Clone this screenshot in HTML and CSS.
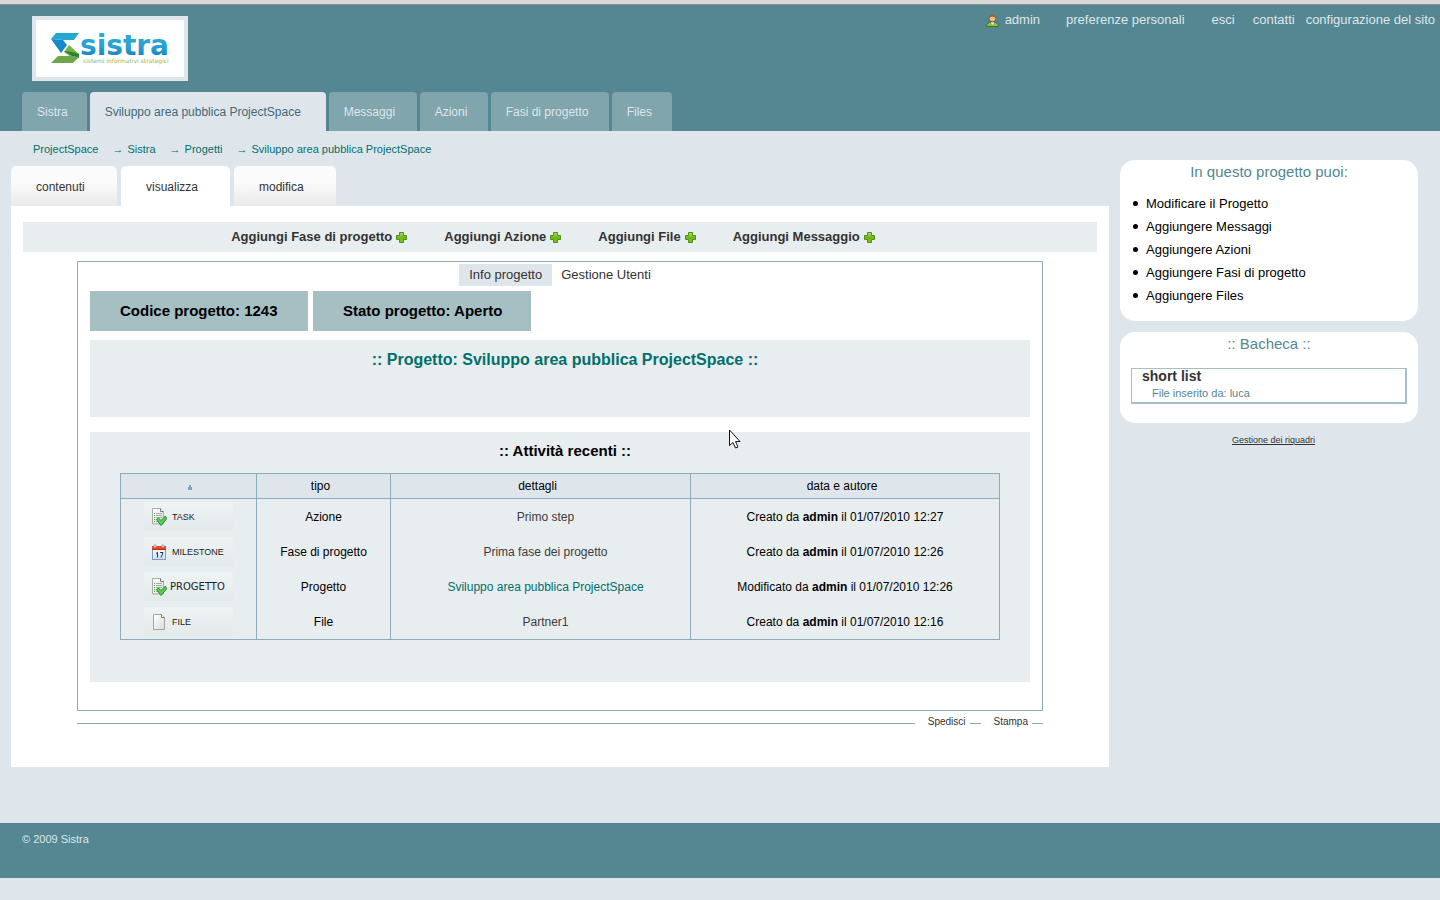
FILE: index.html
```html
<!DOCTYPE html>
<html lang="it">
<head>
<meta charset="utf-8">
<title>Sviluppo area pubblica ProjectSpace</title>
<link rel="stylesheet" href="styles.css">
</head>
<body>
<svg class="defs" width="0" height="0" aria-hidden="true">
  <defs>
    <linearGradient id="plusFill" x1="0" y1="0" x2="0" y2="1"><stop offset="0" stop-color="#b4dc6c"/><stop offset=".5" stop-color="#6fb51c"/><stop offset="1" stop-color="#7cc02a"/></linearGradient>
    <linearGradient id="pageFill" x1="0" y1="0" x2="1" y2="1"><stop offset="0" stop-color="#ffffff"/><stop offset="1" stop-color="#dcdcdc"/></linearGradient>
    <linearGradient id="calFill" x1="0" y1="0" x2="0" y2="1"><stop offset="0" stop-color="#ffffff"/><stop offset="1" stop-color="#c9def2"/></linearGradient>
    <linearGradient id="logoBlue" x1="0" y1="0" x2="0" y2="1"><stop offset="0" stop-color="#2fb0d6"/><stop offset=".55" stop-color="#2a9fd0"/><stop offset="1" stop-color="#0b78b4"/></linearGradient>
  </defs>
  <symbol id="plus" viewBox="0 0 11 11"><path d="M3.5.5h4v3h3v4h-3v3h-4v-3h-3v-4h3z" fill="url(#plusFill)" stroke="#4f9210"/></symbol>
  <symbol id="checklist" viewBox="0 0 16 18">
    <path d="M1.500.5h8l3 3v12.500h-11z" fill="url(#pageFill)" stroke="#a9a9a9"/>
    <path d="M9.500.5v3h3" fill="#fff" stroke="#777"/>
    <path d="M5 5.500h6M5 7.500h6M5 9.500h6M5 11.500h4M5 13.500h3" stroke="#aaa"/>
    <path d="M3 5.500h1M3 7.500h1M3 9.500h1M3 11.500h1M3 13.500h1" stroke="#46ad3c"/>
    <path d="M5.500 11.500l2-1.500 2.500 2.500 4.500-4.500 1 3-5.500 6.500z" fill="#57cf4e" stroke="#249130"/>
  </symbol>
  <symbol id="calendar" viewBox="0 0 16 17">
    <rect x="1.500" y="3.500" width="13" height="12" fill="url(#calFill)" stroke="#7f9bc0"/>
    <path d="M1 2h14v4H1z" fill="#e8472b"/>
    <path d="M1 5h14v1H1z" fill="#b82a14"/>
    <circle cx="4" cy="2" r="1.300" fill="#ddd" stroke="#999" stroke-width=".7"/><circle cx="12" cy="2" r="1.300" fill="#ddd" stroke="#999" stroke-width=".7"/>
    <path d="M5 9.500l1.500-1v5M9 8.500h3l-2 5" fill="none" stroke="#333"/>
  </symbol>
  <symbol id="sheet" viewBox="0 0 16 18">
    <path d="M2.500 1.500h8l3 3v12h-11z" fill="url(#pageFill)" stroke="#a3a3a3"/>
    <path d="M10.500 1.500v3h3" fill="#fff" stroke="#777"/>
  </symbol>
</svg>

<header class="header">
  <div class="masthead">
    <a class="logo" href="#" aria-label="Sistra">
      <svg width="148" height="57" viewBox="0 0 148 57">
        <path d="M20 13h23l-5 7H27L15 19z" fill="#25a7d4"/>
        <path d="M15 19l12 1 4 5-6 8z" fill="#1589c8"/>
        <path d="M33 25l10 9-8 3-7-5z" fill="#79b43c"/>
        <path d="M28 31l8 1 7 2v4l-7-2z" fill="#22843e"/>
        <path d="M22 36h14l7 1-6 6H15z" fill="#6aa84b"/>
        <text class="logo-word" x="44" y="35" fill="url(#logoBlue)">sistra</text>
        <text class="logo-tag" x="47" y="43">sistemi informativi strategici</text>
      </svg>
    </a>
    <nav class="personal" aria-label="Utente">
      <a class="user" href="#">
        <svg width="13" height="13" viewBox="0 0 12 12" aria-hidden="true">
          <path d="M.5 11.500V10l3-2.500h5l3 2.500v1.500z" fill="#8cc63c" stroke="#3d5a22" stroke-width=".7"/>
          <path d="M4.500 7.500L6 10l1.500-2.500z" fill="#fff"/>
          <circle cx="6" cy="4" r="3.200" fill="#f0be84" stroke="#875026" stroke-width=".8"/>
          <path d="M3 4C3 0 9 0 9 4L7.500 2.500H4.500z" fill="#98602d"/>
        </svg>admin</a>
      <a class="prefs" href="#">preferenze personali</a>
      <a class="exit" href="#">esci</a>
      <a class="contact" href="#">contatti</a>
      <a class="config" href="#">configurazione del sito</a>
    </nav>
  </div>
  <nav class="tabs" aria-label="Sezioni">
    <a href="#">Sistra</a>
    <a class="current" href="#">Sviluppo area pubblica ProjectSpace</a>
    <a class="messages" href="#">Messaggi</a>
    <a class="tasks" href="#">Azioni</a>
    <a class="phases" href="#">Fasi di progetto</a>
    <a class="files" href="#">Files</a>
  </nav>
</header>

<div class="layout">
  <main class="main">
    <nav class="crumbs" aria-label="Percorso">
      <a href="#">ProjectSpace</a><span class="arrow">→</span><a href="#">Sistra</a><span class="arrow">→</span><a href="#">Progetti</a><span class="arrow">→</span><a href="#">Sviluppo area pubblica ProjectSpace</a>
    </nav>
    <nav class="views" aria-label="Viste">
      <a class="contents" href="#">contenuti</a>
      <a class="current" href="#">visualizza</a>
      <a class="edit" href="#">modifica</a>
    </nav>
    <section class="sheet">
      <div class="toolbar">
        <a href="#">Aggiungi Fase di progetto<svg width="11" height="11"><use href="#plus"/></svg></a>
        <a href="#">Aggiungi Azione<svg width="11" height="11"><use href="#plus"/></svg></a>
        <a href="#">Aggiungi File<svg width="11" height="11"><use href="#plus"/></svg></a>
        <a href="#">Aggiungi Messaggio<svg width="11" height="11"><use href="#plus"/></svg></a>
      </div>
      <div class="project">
        <nav class="subtabs" aria-label="Progetto">
          <a class="current" href="#">Info progetto</a>
          <a href="#">Gestione Utenti</a>
        </nav>
        <div class="facts">
          <div>Codice progetto: 1243</div>
          <div>Stato progetto: Aperto</div>
        </div>
        <div class="panel title-panel"><h1>:: Progetto: Sviluppo area pubblica ProjectSpace ::</h1></div>
        <div class="panel recent">
          <h2>:: Attività recenti ::</h2>
          <table>
            <thead>
              <tr>
                <th class="c-icon" scope="col" aria-label="ordina"><svg width="4" height="5" viewBox="0 0 4 5"><path d="M1 0h2v2h1v3H0V2h1z" fill="#7fa6b8"/></svg></th>
                <th class="c-type" scope="col">tipo</th>
                <th class="c-detail" scope="col">dettagli</th>
                <th scope="col">data e autore</th>
              </tr>
            </thead>
            <tbody>
              <tr>
                <td class="kind"><span class="badge"><svg width="16" height="18"><use href="#checklist"/></svg>TASK</span></td>
                <td>Azione</td><td class="detail"><a href="#">Primo step</a></td>
                <td>Creato da <b>admin</b> il 01/07/2010 12:27</td>
              </tr>
              <tr>
                <td class="kind"><span class="badge"><svg width="16" height="17"><use href="#calendar"/></svg>MILESTONE</span></td>
                <td>Fase di progetto</td><td class="detail"><a href="#">Prima fase dei progetto</a></td>
                <td>Creato da <b>admin</b> il 01/07/2010 12:26</td>
              </tr>
              <tr>
                <td class="kind"><span class="badge badge-project"><svg width="16" height="18"><use href="#checklist"/></svg>PROGETTO</span></td>
                <td>Progetto</td><td class="detail"><a class="project-link" href="#">Sviluppo area pubblica ProjectSpace</a></td>
                <td>Modificato da <b>admin</b> il 01/07/2010 12:26</td>
              </tr>
              <tr>
                <td class="kind"><span class="badge"><svg width="16" height="18"><use href="#sheet"/></svg>FILE</span></td>
                <td>File</td><td class="detail"><a href="#">Partner1</a></td>
                <td>Creato da <b>admin</b> il 01/07/2010 12:16</td>
              </tr>
            </tbody>
          </table>
        </div>
      </div>
      <div class="actions">
        <span class="rule rule-long"></span><a href="#">Spedisci</a><span class="rule"></span><a href="#">Stampa</a><span class="rule"></span>
      </div>
    </section>
  </main>

  <aside class="side">
    <section class="card">
      <h3>In questo progetto puoi:</h3>
      <ul>
        <li>Modificare il Progetto</li>
        <li>Aggiungere Messaggi</li>
        <li>Aggiungere Azioni</li>
        <li>Aggiungere Fasi di progetto</li>
        <li>Aggiungere Files</li>
      </ul>
    </section>
    <section class="card">
      <h3>:: Bacheca ::</h3>
      <div class="note">
        <a href="#">short list</a>
        <p>File inserito da: luca</p>
      </div>
    </section>
    <a class="manage" href="#">Gestione dei riquadri</a>
  </aside>
</div>

<footer class="footer">© 2009 Sistra</footer>

<svg class="pointer" width="14" height="21" viewBox="0 0 14 21" aria-hidden="true"><path d="M1.500 1v15.500l3.500-3 2.500 5.500 2.500-1-2.500-5.500h4.500z" fill="#fff" stroke="#111"/></svg>
</body>
</html>
```
FILE: styles.css
```css
* { box-sizing: border-box; }

body {
  margin: 0;
  position: relative;
  min-height: 100vh;
  background: #dee6ec;
  color: #000;
  font: 12px/16px "Liberation Sans", Arial, sans-serif;
}

a { color: inherit; text-decoration: none; }
h1, h2, h3, p, ul { margin: 0; padding: 0; }
svg { display: block; flex: none; }
.defs { position: absolute; }

/* Header */
.header {
  border-top: 4px solid #d9d9d9;
  background: #548791;
  box-shadow: inset 0 1px #8c8c8c;
}

.masthead {
  display: flex;
  justify-content: space-between;
  align-items: flex-start;
  height: 88px;
  padding: 6px 5px 0 32px;
}

.logo {
  margin-top: 6px;
  border: 4px solid #dee6ec;
  background: #fff;
}

.logo-word { font: bold 28px "DejaVu Sans", sans-serif; }
.logo-tag { font: 6px "DejaVu Sans", sans-serif; fill: #8dba62; }

.personal {
  display: flex;
  color: #dee6ec;
  font-size: 13px;
  line-height: 20px;
}

.user { display: flex; align-items: center; gap: 6px; }
.prefs { margin-left: 26px; }
.exit { margin-left: 27px; }
.contact { margin-left: 18px; }
.config { margin-left: 11px; }

.tabs { display: flex; gap: 3px; padding-left: 22px; }

.tabs a {
  padding: 1px 19px 0 15px;
  border-radius: 4px 4px 0 0;
  background: #80a5ad;
  color: #dee6ec;
  line-height: 38px;
}

.tabs .current { min-width: 236px; background: #dee6ec; color: #436976; }
.tabs .messages { min-width: 88px; }
.tabs .tasks { min-width: 68px; }
.tabs .phases { min-width: 118px; }
.tabs .files { min-width: 60px; }

/* Columns */
.layout {
  display: flex;
  gap: 11px;
  padding: 0 22px 56px 11px;
}

.main { flex: 1; min-width: 0; }

.crumbs {
  display: flex;
  padding: 9px 22px 8px;
  color: #00706d;
  font-size: 11px;
  line-height: 18px;
}

.arrow { margin: 0 4px 0 14px; }

.views { display: flex; gap: 4px; }

.views a {
  padding: 2px 31px 0 25px;
  border-radius: 5px 5px 0 0;
  background: linear-gradient(#fbfbfb 40%, #e9e9e9);
  color: #333;
  line-height: 38px;
}

.views .contents { min-width: 106px; }
.views .current { min-width: 109px; background: #fff; }
.views .edit { min-width: 102px; }

.sheet { padding: 16px 12px 37px; background: #fff; }

.toolbar {
  display: flex;
  justify-content: center;
  gap: 37px;
  padding-right: 14px;
  background: #e8edef;
  color: #333;
  font-size: 13px;
  font-weight: bold;
  line-height: 30px;
}

.toolbar a { display: flex; align-items: center; gap: 4px; }

.project {
  margin: 9px 54px 0;
  padding: 2px 12px 28px;
  border: 1px solid #8cacbb;
}

.subtabs {
  display: flex;
  justify-content: center;
  padding-right: 1px;
  color: #333;
  font-size: 13px;
  line-height: 22px;
}

.subtabs a { padding: 0 9px; }
.subtabs .current { padding: 0 10px; background: #dee6ec; }

.facts { display: flex; gap: 5px; margin: 5px 0 9px; }

.facts div {
  min-width: 218px;
  padding: 0 29px 0 30px;
  background: #a5bfc3;
  font-size: 15px;
  font-weight: bold;
  line-height: 40px;
}

.panel { background: #e8edef; }
.panel h1, .panel h2 { padding-left: 10px; text-align: center; }
.panel h1 { color: #00706d; font-size: 16px; line-height: 20px; }
.panel h2 { font-size: 15px; line-height: 20px; }
.title-panel { padding: 10px 0 47px; }

.recent { margin-top: 15px; padding: 9px 30px 42px; }

table {
  width: 100%;
  margin-top: 12px;
  border: 1px solid #8cacbb;
  border-collapse: collapse;
  table-layout: fixed;
  text-align: center;
}

th, td { padding: 0; border-left: 1px solid #8cacbb; }

th {
  height: 25px;
  padding-right: 6px;
  border-bottom: 1px solid #8cacbb;
  background: #dee6ec;
  font-weight: normal;
}

th svg { margin: 3px auto 0; }
th.c-icon { padding: 0 0 0 3px; }
td { height: 35px; padding-top: 2px; }
tr:last-child td { height: 36px; }
td.kind { padding: 0; }
.c-icon { width: 136px; }
.c-type { width: 134px; }
.c-detail { width: 300px; }
.detail { padding-left: 10px; color: #3c3c3c; }
.project-link { color: #00706d; }

.badge {
  display: flex;
  align-items: center;
  gap: 5px;
  width: 89px;
  height: 29px;
  margin: 0 auto;
  padding: 2px 0 0 7px;
  border-radius: 3px;
  background: linear-gradient(#eef3f3, #e3eaec);
  color: #222;
  font-size: 9px;
}

.badge-project { gap: 3px; font-family: "DejaVu Sans", sans-serif; font-size: 10px; }

.actions {
  display: flex;
  align-items: center;
  margin: 3px 54px 0;
  color: #333;
  font-size: 10px;
}

.actions a { margin: 0 4px 0 13px; }
.rule { width: 11px; height: 1px; margin-top: 2px; background: #8cacac; }
.rule-long { flex: 1; }

/* Sidebar */
.side { width: 298px; padding-top: 29px; }

.card {
  margin-bottom: 11px;
  padding: 2px 11px 19px;
  border-radius: 15px;
  background: #fff;
}

.card h3 {
  color: #548791;
  font-size: 15px;
  font-weight: normal;
  line-height: 20px;
  text-align: center;
}

.card ul {
  margin: 10px 0 -5px;
  padding-left: 2px;
  font-size: 13px;
  line-height: 23px;
  list-style: none;
}

.card li { display: flex; align-items: center; gap: 8px; }

.card li::before {
  content: "";
  width: 5px;
  height: 5px;
  border-radius: 50%;
  background: #000;
}

.note {
  margin-top: 14px;
  padding: 0 10px;
  border: solid #a5bfc3;
  border-width: 1px 2px 2px 1px;
}

.note a { display: block; color: #333; font-size: 14px; font-weight: bold; line-height: 15px; }
.note p { padding-left: 10px; color: #548791; font-size: 11px; line-height: 18px; }

.manage {
  display: block;
  padding-left: 9px;
  color: #333;
  font-size: 9px;
  line-height: 12px;
  text-align: center;
  text-decoration: underline;
}

.footer {
  padding: 8px 22px 31px;
  background: #548791;
  color: #dee6ec;
  font-size: 11px;
}

.pointer { position: absolute; left: 728px; top: 429px; }
```
